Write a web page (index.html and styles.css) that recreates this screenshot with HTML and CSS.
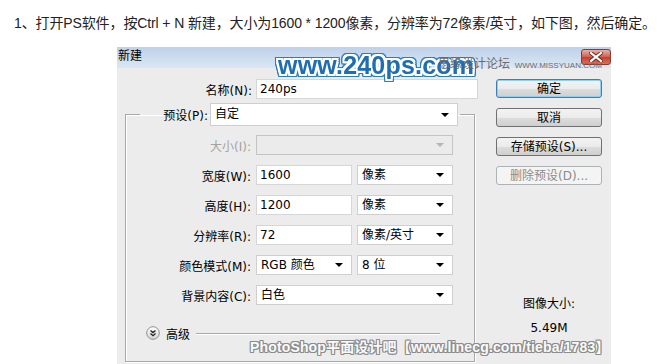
FILE: index.html
```html
<!DOCTYPE html>
<html lang="zh-CN">
<head>
  <meta charset="UTF-8" />
  <meta name="viewport" content="width=device-width, initial-scale=1.0"/>
  <title>新建</title>
  <link rel="stylesheet" href="styles.css">
</head>
<body>
  <p class="step">1、打开PS软件，按Ctrl + N 新建，大小为1600 * 1200像素，分辨率为72像素/英寸，如下图，然后确定。</p>

  <div class="dialog">
    <div class="titlebar">
      <span class="title">新建</span>
      <span class="close">
        <svg width="14" height="10" viewBox="0 0 14 10">
          <path d="M2 1 L12 9 M12 1 L2 9" stroke="#6b2a22" stroke-width="4" stroke-linecap="square"/>
          <path d="M2 1 L12 9 M12 1 L2 9" stroke="#fff" stroke-width="2.2" stroke-linecap="square"/>
        </svg>
      </span>
    </div>

    <div class="dialog-body">
      <div class="form">
        <div class="row">
          <label>名称(N):</label>
          <input class="field" type="text" value="240ps">
        </div>

        <fieldset class="group">
          <legend class="preset">
            <label>预设(P):</label>
            <div class="select preset-select">自定<span class="arrow"></span></div>
          </legend>

          <div class="grid">
            <label class="off">大小(I):</label>
            <div class="select span2 off"><span class="arrow"></span></div>

            <label>宽度(W):</label>
            <input class="field" type="text" value="1600">
            <div class="select">像素<span class="arrow"></span></div>

            <label>高度(H):</label>
            <input class="field" type="text" value="1200">
            <div class="select">像素<span class="arrow"></span></div>

            <label>分辨率(R):</label>
            <input class="field" type="text" value="72">
            <div class="select">像素/英寸<span class="arrow"></span></div>

            <label>颜色模式(M):</label>
            <div class="select">RGB 颜色<span class="arrow"></span></div>
            <div class="select">8 位<span class="arrow"></span></div>

            <label>背景内容(C):</label>
            <div class="select span2">白色<span class="arrow"></span></div>
          </div>

          <div class="advanced">
            <svg width="14" height="14" viewBox="0 0 14 14">
              <defs>
                <linearGradient id="adv" x1="0" y1="0" x2="0" y2="1">
                  <stop offset="0" stop-color="#ffffff"/>
                  <stop offset="1" stop-color="#d4d4d4"/>
                </linearGradient>
              </defs>
              <circle cx="7" cy="7" r="6.3" fill="url(#adv)" stroke="#8f8f8f"/>
              <path d="M4.5 4.5 L7 6.6 L9.5 4.5 M4.5 7.6 L7 9.7 L9.5 7.6" fill="none" stroke="#222" stroke-width="1.3"/>
            </svg>
            <span>高级</span>
            <span class="rule"></span>
          </div>
        </fieldset>
      </div>

      <div class="side">
        <button class="btn default">确定</button>
        <button class="btn">取消</button>
        <button class="btn">存储预设(S)...</button>
        <button class="btn" disabled>删除预设(D)...</button>

        <div class="info">
          <div>图像大小:</div>
          <div>5.49M</div>
        </div>
      </div>
    </div>

    <!-- watermarks lying over the dialog -->
    <div class="mark mark-240">www.240ps.com</div>
    <div class="mark mark-missyuan">思缘设计论坛 <span>WWW.MISSYUAN.COM</span></div>
    <div class="mark mark-linecg">PhotoShop平面设计吧【www.linecg.com/tieba/1783】</div>
  </div>
</body>
</html>
```

FILE: styles.css
```css
html, body {
  margin: 0;
  background: #fff;
  overflow: hidden;
}

body {
  font-family: "Liberation Sans", "Noto Sans CJK SC", sans-serif;
  color: #222;
  height: 364px;
}

.step {
  margin: 0;
  padding: 15px 0 0 14px;
  font-size: 14px;
  line-height: 16px;
  letter-spacing: -0.12px;
  white-space: nowrap;
}

/* dialog window */
.dialog {
  position: relative;
  margin: 16px 0 0 117px;
  width: 494px;
  height: 317px;
  background: #ececec;
  font-family: "DejaVu Sans", "Noto Sans CJK SC", sans-serif;
  font-size: 12px;
  color: #000;
}

.titlebar {
  position: relative;
  height: 21px;
  line-height: 19px;
  background: linear-gradient(#bdd1ea, #dce7f4);
}

.title {
  padding-left: 1px;
}

.close {
  position: absolute;
  right: 0;
  top: 2px;
  width: 30px;
  height: 16px;
  box-sizing: border-box;
  border: 1px solid #8a3a30;
  border-radius: 3px;
  background: linear-gradient(#eab0a4, #d0604f 50%, #c0402e 51%, #d8705c);
  display: flex;
  align-items: center;
  justify-content: center;
}

.dialog-body {
  display: flex;
  padding: 11px 0 0 8px;
}

.form {
  width: 350px;
}

.row {
  display: grid;
  grid-template-columns: 127px 222px;
  column-gap: 4px;
  align-items: center;
  height: 19px;
}

label {
  text-align: right;
  white-space: nowrap;
}

.field {
  height: 20px;
  box-sizing: border-box;
  border: 1px solid #d6d6d6;
  background: #fff;
  padding: 0 3px;
  font: inherit;
  color: #000;
  outline: none;
}

.select {
  position: relative;
  height: 20px;
  box-sizing: border-box;
  border: 1px solid #cfcfcf;
  background: #fff;
  padding-left: 4px;
  line-height: 18px;
  white-space: nowrap;
}

.select .arrow {
  position: absolute;
  right: 8px;
  top: 7px;
  border-left: 4px solid transparent;
  border-right: 4px solid transparent;
  border-top: 4px solid #000;
}

.select.off {
  background: #ebebeb;
  border-color: #c4c4c4;
}

.select.off .arrow {
  border-top-color: #b5b5b5;
}

label.off {
  color: #a3a3a3;
}

/* preset group */
.group {
  margin: 5px 0 0;
  padding: 9px 0 20px;
  width: 350px;
  box-sizing: border-box;
  min-width: 0;
  border: 1px solid #a9a9a9;
  box-shadow: inset 1px 1px 0 #fff, 1px 1px 0 #fff;
}

.preset {
  display: flex;
  align-items: center;
  gap: 2px;
  margin-left: 14px;
  padding: 0 2px;
  height: 23px;
}

.preset label {
  width: 66px;
}

.preset-select {
  width: 248px;
  height: 23px;
  line-height: 21px;
}

.preset-select .arrow {
  top: 9px;
}

.grid {
  display: grid;
  grid-template-columns: 125px 96px 96px;
  grid-auto-rows: 20px;
  column-gap: 5px;
  row-gap: 10px;
  align-items: center;
}

.span2 {
  grid-column: span 2;
}

.advanced {
  display: flex;
  align-items: center;
  gap: 6px;
  margin-top: 20px;
  height: 16px;
  padding: 0 34px 0 20px;
}

.advanced .rule {
  flex: 1;
  height: 1px;
  background: #a9a9a9;
  box-shadow: 0 1px 0 #fff;
}

/* buttons column */
.side {
  display: flex;
  flex-direction: column;
  gap: 10px;
  width: 106px;
  margin-left: 21px;
}

.btn {
  height: 19px;
  padding: 0;
  border: 1px solid #707070;
  border-radius: 3px;
  background: linear-gradient(#f3f3f3, #ebebeb 50%, #dddddd 51%, #cfcfcf);
  font: inherit;
  color: #000;
  line-height: 16px;
}

.btn.default {
  border-color: #3c7fb1;
  box-shadow: inset 0 0 0 1px #8fd0f2;
}

.btn:disabled {
  border-color: #adb2b5;
  background: #f4f4f4;
  color: #8b8b8b;
}

.info {
  margin-top: 97px;
  text-align: center;
  line-height: 24px;
}

/* watermarks */
.mark {
  position: absolute;
  white-space: nowrap;
  pointer-events: none;
}

.mark-240 {
  left: 161px;
  top: 4px;
  font: bold 25px/28px "Liberation Sans", sans-serif;
  letter-spacing: 0.2px;
  color: #1e6eb1;
  text-shadow:
    2px 0 0 #fff, -2px 0 0 #fff, 0 2px 0 #fff, 0 -2px 0 #fff,
    2px 2px 0 #fff, -2px 2px 0 #fff, 2px -2px 0 #fff, -2px -2px 0 #fff;
  filter: drop-shadow(1px 0 0 #2b7dbd) drop-shadow(-1px 0 0 #2b7dbd) drop-shadow(0 1px 0 #2b7dbd) drop-shadow(0 -1px 0 #2b7dbd);
}

.mark-missyuan {
  left: 321px;
  top: 9px;
  font-family: "Noto Sans CJK SC", sans-serif;
  font-size: 12px;
  line-height: 14px;
  color: #6c6c6c;
}

.mark-missyuan span {
  font-family: "Liberation Sans", sans-serif;
  font-size: 8px;
  margin-left: 2px;
}

.mark-linecg {
  left: 133px;
  top: 291px;
  font: bold 14px/18px "Liberation Sans", "Noto Sans CJK SC", sans-serif;
  letter-spacing: 0.15px;
  color: #fafafa;
  text-shadow:
    1px 0 0 #8c8c8c, -1px 0 0 #8c8c8c, 0 1px 0 #8c8c8c, 0 -1px 0 #8c8c8c,
    1px 1px 0 #8c8c8c, -1px 1px 0 #8c8c8c, 1px -1px 0 #8c8c8c, -1px -1px 0 #8c8c8c;
}
```
